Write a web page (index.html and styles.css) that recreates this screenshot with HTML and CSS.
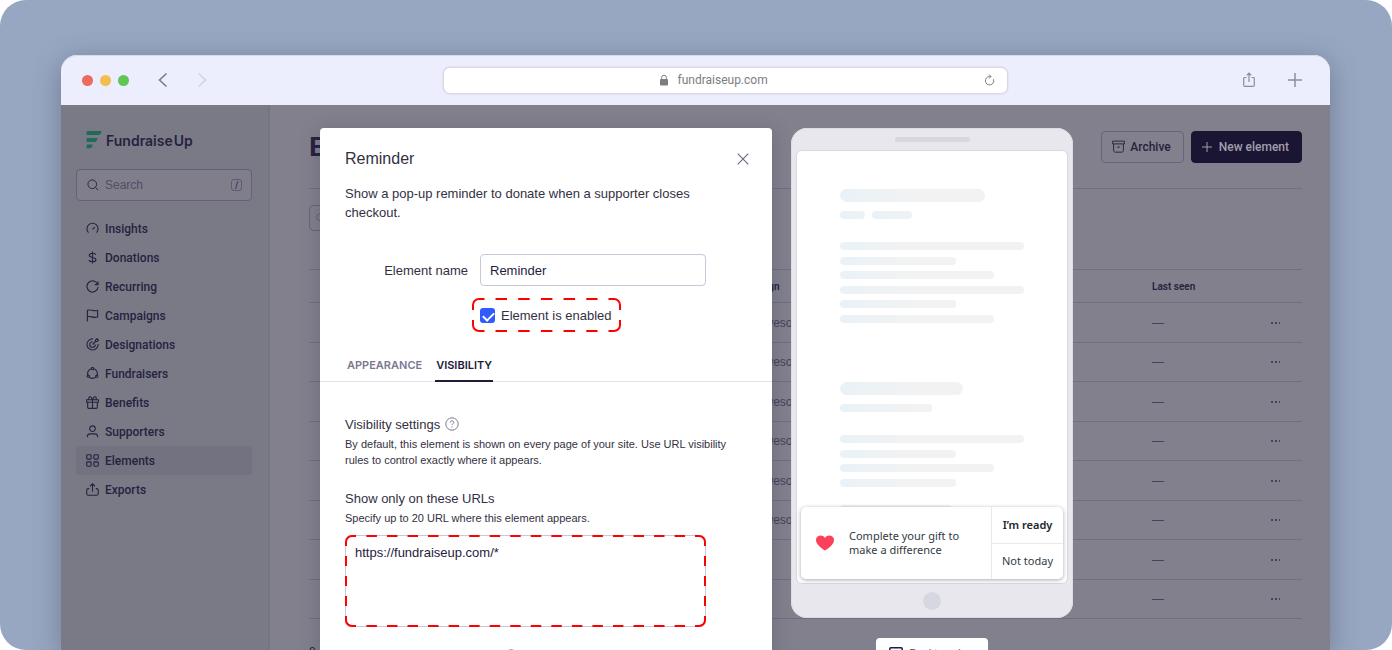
FILE: index.html
```html
<!DOCTYPE html>
<html lang="en">
<head>
  <meta charset="UTF-8" />
  <meta name="viewport" content="width=device-width, initial-scale=1.0" />
  <title>Fundraise Up - Elements</title>
  <link rel="stylesheet" href="styles.css">
</head>
<body>

<div class="stage">
  <div class="browser">

    <header class="chrome">
      <div class="chrome-left">
        <span class="dot red"></span><span class="dot yellow"></span><span class="dot green"></span>
        <button class="nav-btn back" aria-label="Back"><svg width="10" height="16" viewBox="0 0 10 16"><path d="M8.500 1.500 1.500 8l7 6.500"/></svg></button>
        <button class="nav-btn forward" aria-label="Forward"><svg width="10" height="16" viewBox="0 0 10 16"><path d="M1.500 1.500 8.500 8l-7 6.500"/></svg></button>
      </div>
      <div class="url-bar">
        <svg class="lock" width="8" height="12" viewBox="0 0 8 12"><rect x="0" y="5" width="8" height="6.500" rx="1"/><path d="M1.700 5.500V3.500a2.300 2.300 0 0 1 4.600 0v2"/></svg>
        <input class="url" type="text" aria-label="Address" value="fundraiseup.com">
        <button class="reload" aria-label="Reload"><svg width="11" height="12" viewBox="0 0 11 12"><path d="M9.500 5.200a4.200 4.200 0 1 1-4-2.700h1.300M5 .5l2 2-2 2"/></svg></button>
      </div>
      <div class="chrome-right">
        <button class="nav-btn" aria-label="Share"><svg width="12" height="16" viewBox="0 0 12 16"><path d="M3.500 5.500H2A1.200 1.200 0 0 0 .7 6.700v6.500A1.200 1.200 0 0 0 2 14.400h8a1.200 1.200 0 0 0 1.300-1.200V6.700A1.200 1.200 0 0 0 10 5.500H8.500M6 10V1.200M3.700 3.300 6 1l2.300 2.300"/></svg></button>
        <button class="nav-btn plus" aria-label="New tab"><svg width="14" height="14" viewBox="0 0 14 14"><path d="M7 0v14M0 7h14"/></svg></button>
      </div>
    </header>

    <div class="app">
      <aside class="sidebar">
        <a class="logo" href="#">
          <svg width="16" height="18" viewBox="0 0 16 18"><path d="M2 0h13.500c-.2 2.700-1.300 4-3.500 4H.5V1.500C.5.600 1 0 2 0zM2 7h9.500c-.2 2.700-1.300 4-3.500 4H.5V8.500C.5 7.600 1 7 2 7zM2 13.500h4.700c-.2 2.600-1.200 3.800-3.200 3.800h-3V15c0-.9.5-1.500 1.500-1.500z"/></svg>
          <span>Fundraise<span class="up">Up</span></span>
        </a>
        <label class="search">
          <svg width="12" height="12" viewBox="0 0 13 13"><circle cx="5.700" cy="5.700" r="4.700"/><path d="m9.200 9.200 2.900 2.900"/></svg>
          <input type="text" placeholder="Search" aria-label="Search">
          <kbd>/</kbd>
        </label>
        <nav class="menu">
          <a href="#"><svg viewBox="0 0 14 14"><path d="M2.700 11.500a6 6 0 1 1 8.600 0M7 8l2.500-2.500"/></svg>Insights</a>
          <a href="#"><svg viewBox="0 0 14 14"><path d="M7 .5v13M10.500 4.300C10.200 3 9 2.400 7 2.400S3.500 3.200 3.500 4.700 5 6.700 7 7s3.700.8 3.700 2.400S9 11.600 7 11.600 3.500 11 3.200 9.600"/></svg>Donations</a>
          <a href="#"><svg viewBox="0 0 14 14"><path d="M13 1.500V5H9.500M12.700 5A6 6 0 1 0 13 7.500"/></svg>Recurring</a>
          <a href="#"><svg viewBox="0 0 14 14"><path d="M1.500 13.500V1.300c3.500-1.300 6 1.600 11 .4v7c-5 1.300-7.500-1.600-11-.4"/></svg>Campaigns</a>
          <a href="#"><svg viewBox="0 0 14 14"><path d="M7.500 1A6 6 0 1 0 13 6.500M7 4a3 3 0 1 0 3 3M7 7l3.500-3.500M10.200 3.800V2.200L12 .6l.2 1.400 1.400.2L12 3.800z"/></svg>Designations</a>
          <a href="#"><svg viewBox="0 0 14 14"><circle cx="7" cy="7" r="5.300"/><circle class="node" cx="7" cy="1.700" r="1.200"/><circle class="node" cx="2.400" cy="9.900" r="1.200"/><circle class="node" cx="11.600" cy="9.900" r="1.200"/></svg>Fundraisers</a>
          <a href="#"><svg viewBox="0 0 14 14"><path d="M.7 4h12.600v2.800H.7zM1.800 6.800V12c0 .8.500 1.300 1.300 1.300h7.800c.8 0 1.300-.5 1.300-1.300V6.800M7 4v9.300M7 4C6 1 4.800.6 3.900.8 2.500 1.200 2.600 3.500 4 4M7 4c1-3 2.200-3.400 3.100-3.200C11.500 1.200 11.400 3.500 10 4"/></svg>Benefits</a>
          <a href="#"><svg viewBox="0 0 14 14"><circle cx="7" cy="4" r="3"/><path d="M1.500 13.300v-.8c0-2 1.300-3 3-3h5c1.700 0 3 1 3 3v.8"/></svg>Supporters</a>
          <a class="active" href="#"><svg viewBox="0 0 14 14"><rect x=".8" y=".8" width="4.700" height="4.700" rx="1"/><rect x="8.500" y=".8" width="4.700" height="4.700" rx="1"/><rect x=".8" y="8.500" width="4.700" height="4.700" rx="1"/><rect x="8.500" y="8.500" width="4.700" height="4.700" rx="1"/></svg>Elements</a>
          <a href="#"><svg viewBox="0 0 14 14"><path d="M3.500 6H2.700C1.500 6 .8 6.800.8 7.800v3.400c0 1.200.8 2 2 2h8.400c1.200 0 2-.8 2-2V7.800c0-1-.7-1.800-1.900-1.800h-.8M7 9.500V1M4.300 3.500 7 .8l2.700 2.700"/></svg>Exports</a>
        </nav>
      </aside>

      <main class="main">
        <div class="page-head">
          <h1>Elements</h1>
          <div class="actions">
            <button class="btn"><svg width="13" height="13" viewBox="0 0 14 14"><path d="M.7 1.200h12.600v3H.7zM1.700 4.200v7c0 1.200.7 1.900 1.900 1.900h6.800c1.200 0 1.900-.7 1.900-1.900v-7M5.500 7.700h3"/></svg>Archive</button>
            <button class="btn dark"><svg width="10" height="10" viewBox="0 0 10 10"><path d="M5 0v10M0 5h10"/></svg>New element</button>
          </div>
        </div>
        <label class="filter">
          <svg width="10" height="10" viewBox="0 0 13 13"><circle cx="5.700" cy="5.700" r="4.700"/><path d="m9.200 9.200 2.900 2.900"/></svg>
          <input type="text" aria-label="Filter elements">
        </label>
        <table>
          <thead>
            <tr><th class="col-name"></th><th class="col-campaign">Campaign</th><th class="col-seen">Last seen</th><th class="col-more"></th></tr>
          </thead>
          <tbody>
            <tr><td></td><td>Our Awesome</td><td>—</td><td><button class="more" aria-label="More"></button></td></tr>
            <tr><td></td><td>Our Awesome</td><td>—</td><td><button class="more" aria-label="More"></button></td></tr>
            <tr><td></td><td>Our Awesome</td><td>—</td><td><button class="more" aria-label="More"></button></td></tr>
            <tr><td></td><td>Our Awesome</td><td>—</td><td><button class="more" aria-label="More"></button></td></tr>
            <tr><td></td><td>Our Awesome</td><td>—</td><td><button class="more" aria-label="More"></button></td></tr>
            <tr><td></td><td>Our Awesome</td><td>—</td><td><button class="more" aria-label="More"></button></td></tr>
            <tr><td></td><td></td><td>—</td><td><button class="more" aria-label="More"></button></td></tr>
            <tr><td></td><td></td><td>—</td><td><button class="more" aria-label="More"></button></td></tr>
          </tbody>
        </table>
        <p class="count">8 elements</p>
      </main>

      <div class="overlay">
        <section class="modal" role="dialog" aria-labelledby="modal-title">
          <div class="modal-head">
            <h2 id="modal-title">Reminder</h2>
            <button class="close" aria-label="Close"><svg width="12" height="12" viewBox="0 0 12 12"><path d="m.7.700 10.600 10.600M11.300.700.700 11.300"/></svg></button>
          </div>
          <p class="intro">Show a pop-up reminder to donate when a supporter closes checkout.</p>

          <div class="field">
            <label for="element-name">Element name</label>
            <input id="element-name" type="text" value="Reminder">
          </div>

          <div class="enabled">
            <input id="enabled" type="checkbox" checked>
            <label for="enabled">Element is enabled</label>
            <svg class="marker" viewBox="0 0 149 34" preserveAspectRatio="none">
              <path d="M1 12V7a6 6 0 0 1 6-6h5.500M136.500 1h5.500a6 6 0 0 1 6 6v5M148 22v5a6 6 0 0 1-6 6h-5.500M12.500 33H7a6 6 0 0 1-6-6v-5"/>
              <path class="dashes-short" d="M23.500 1h102M23.500 33h102"/>
            </svg>
          </div>

          <div class="tabs">
            <button class="tab">APPEARANCE</button>
            <button class="tab current">VISIBILITY</button>
          </div>

          <div class="settings">
            <h3>Visibility settings
              <svg class="help" width="14" height="14" viewBox="0 0 14 14"><circle cx="7" cy="7" r="6.200"/><path d="M5.200 5.600c0-1.200.8-1.800 1.800-1.800s1.800.6 1.800 1.600c0 1.300-1.800 1.400-1.800 2.700M7 9.500v1"/></svg>
            </h3>
            <p>By default, this element is shown on every page of your site. Use URL visibility rules to control exactly where it appears.</p>

            <h3><label for="urls">Show only on these URLs</label></h3>
            <p>Specify up to 20 URL where this element appears.</p>
            <div class="urls">
              <textarea id="urls" spellcheck="false">https://fundraiseup.com/*</textarea>
              <svg class="marker" viewBox="0 0 362 92" preserveAspectRatio="none">
                <path d="M1 11V7a6 6 0 0 1 6-6h4M351 1h4a6 6 0 0 1 6 6v4M361 81v4a6 6 0 0 1-6 6h-4M11 91H7a6 6 0 0 1-6-6v-4"/>
                <path class="dashes-long" d="M21.500 1h320M21.500 91h320"/>
                <path class="dashes-side" d="M1 21v51M361 21v51"/>
              </svg>
            </div>

            <h3>Don't show on these URLs
              <svg class="help" width="14" height="14" viewBox="0 0 14 14"><circle cx="7" cy="7" r="6.200"/><path d="M5.200 5.600c0-1.200.8-1.800 1.800-1.800s1.800.6 1.800 1.600c0 1.300-1.800 1.400-1.800 2.700M7 9.500v1"/></svg>
            </h3>
          </div>
        </section>

        <section class="preview">
          <div class="phone">
            <div class="speaker"></div>
            <div class="screen">
              <div class="skeleton">
                <i class="bar tall w145"></i>
                <div class="pair"><i class="bar w25"></i><i class="bar w40"></i></div>
                <div class="lines six">
                  <i class="bar w184"></i><i class="bar w116"></i><i class="bar w154"></i><i class="bar w184"></i><i class="bar w116"></i><i class="bar w154"></i>
                </div>
                <i class="bar tall second w123"></i>
                <div class="pair"><i class="bar w92"></i></div>
                <div class="lines four">
                  <i class="bar w184"></i><i class="bar w116"></i><i class="bar w154"></i><i class="bar w116"></i>
                </div>
                <i class="bar last w112"></i>
              </div>
              <div class="toast">
                <svg class="heart" width="18" height="16" viewBox="0 0 18 16"><path d="M9 15.500C6.500 14 0 9.800 0 5 0 2.200 2.200.5 4.600.5 6.500.5 8 1.300 9 3c1-1.700 2.500-2.500 4.400-2.500C15.800.5 18 2.200 18 5c0 4.800-6.500 9-9 10.500z"/></svg>
                <p>Complete your gift to make a difference</p>
                <div class="toast-actions">
                  <button class="ready">I’m ready</button>
                  <button>Not today</button>
                </div>
              </div>
            </div>
            <div class="home"></div>
          </div>
          <button class="view"><svg width="14" height="12" viewBox="0 0 14 12"><path d="M.8 1.800c0-.6.400-1 1-1h10.400c.6 0 1 .4 1 1V9H.8zM0 11h14"/></svg>Desktop view</button>
        </section>
      </div>
    </div>

  </div>
</div>

</body>
</html>
```
FILE: styles.css
```css
* { margin: 0; padding: 0; box-sizing: border-box; }
body { background: #fff; font-family: "Liberation Sans", Arial, sans-serif; font-size: 13px; color: #33313f; }
button, input, textarea { font: inherit; color: inherit; background: none; border: none; outline: none; }
button { cursor: pointer; }
a { color: inherit; text-decoration: none; }
svg { fill: none; stroke: currentColor; flex: none; }

.stage { height: 100vh; padding: 55px 62px 0 61px; background: #98a7c1; border-radius: 26px; overflow: hidden; }
.browser { display: flex; flex-direction: column; height: 100%; border-radius: 16px 16px 0 0; box-shadow: 0 6px 28px rgba(50,60,85,.4); }

/* browser bar */
.chrome { display: grid; grid-template-columns: 361px 1fr 294px; align-items: center; height: 50px; padding: 0 28px 0 21px; background: #ecedfd; border-radius: 16px 16px 0 0; box-shadow: inset 0 1px #d6dbec; }
.chrome-left { display: flex; align-items: center; gap: 7px; }
.dot { width: 11px; height: 11px; border-radius: 50%; }
.red { background: #ed6a5e; }
.yellow { background: #f5bd4f; }
.green { background: #61c554; }
.nav-btn { display: flex; color: #8e8e93; stroke-width: 1.200; }
.back { margin-left: 22px; color: #77777c; stroke-width: 1.500; }
.forward { margin-left: 22px; color: #d2d3e2; stroke-width: 1.500; }
.chrome-right { display: flex; justify-content: flex-end; align-items: center; gap: 33px; }
.plus { stroke-width: 1.500; }
.url-bar { position: relative; display: flex; align-items: center; justify-content: center; gap: 10px; height: 27px; padding-right: 22px; background: #fff; border: 1px solid #d8d8e8; border-radius: 7px; box-shadow: 0 0 2px #cfcfe0; color: #7d7d80; }
.lock rect { fill: currentColor; stroke: none; }
.url { width: 92px; font-family: Roboto, sans-serif; font-size: 12px; }
.reload { position: absolute; right: 12px; display: flex; }

/* app */
.app { position: relative; display: flex; flex: 1; min-height: 0; overflow: hidden; background: #82808c; color: #26223f; }
.sidebar { width: 209px; padding: 25px 16px 0 15px; background: #7a7a86; border-right: 2px solid #757583; }
.logo { display: flex; align-items: center; gap: 4px; height: 20px; margin-left: 10px; font-family: Inter, sans-serif; font-size: 14px; font-weight: 600; }
.logo svg { fill: #216a58; stroke: none; }
.up { margin-left: 1px; }
.search { display: flex; align-items: center; gap: 6px; height: 32px; margin: 19px 0 13px; padding: 0 9px 0 10px; border: 1px solid #636079; border-radius: 4px; background: #807e8a; }
.search input { flex: 1; min-width: 0; font-size: 12px; }
.search input::placeholder { color: #514e66; opacity: 1; }
kbd { width: 11px; height: 12px; border: 1px solid #5c5972; border-radius: 3px; font: 9px/10px Inter, sans-serif; text-align: center; }
.menu a { display: flex; align-items: center; gap: 6px; height: 29px; padding-left: 10px; border-radius: 3px; font-family: Roboto, sans-serif; font-size: 12px; font-weight: 500; }
.menu svg { width: 13px; height: 13px; stroke-width: 1.200; }
.menu .node { fill: #7a7a86; }
.menu .active { background: #737280; }

.main { flex: 1; min-width: 0; padding: 0 28px 0 39px; }
.page-head { display: flex; align-items: center; justify-content: space-between; height: 84px; border-bottom: 1px solid #706e7f; }
h1 { font-size: 28px; }
.actions { display: flex; gap: 7px; }
.btn { display: flex; align-items: center; gap: 5px; height: 32px; padding: 0 12px 0 10px; border: 1px solid #66637b; border-radius: 4px; font-family: Roboto, sans-serif; font-size: 12px; font-weight: 500; }
.btn.dark { gap: 7px; background: #1a1533; border-color: #1a1533; color: #a19fac; }
.filter { display: flex; align-items: center; width: 200px; height: 26px; margin: 16px 0 38px; padding: 0 6px; border: 1px solid #66637b; border-radius: 5px; color: #5a5870; }
table { width: 100%; border-collapse: collapse; table-layout: fixed; border-top: 1px solid #706e7f; }
tr { height: 39px; border-bottom: 1px solid #706e7f; }
tbody tr:nth-child(odd) { height: 40px; }
thead tr { height: 33px; }
th { font-family: Roboto, sans-serif; font-size: 10px; font-weight: 600; text-align: left; }
td { font-size: 12px; line-height: 14px; color: #45425b; }
.col-name { width: 425px; }
.col-seen { width: 118px; }
.col-more { width: 32px; }
.more { display: block; width: 10px; height: 2px; background: radial-gradient(circle, #45425b 1px, transparent 1px) 0 0 / 4px 2px; }
.count { margin-top: 26px; font-size: 12px; }

/* dialog and preview */
.overlay { position: absolute; inset: 0; display: flex; justify-content: center; gap: 19px; padding: 23px 0 0 2px; overflow: hidden; color: #33313f; }
.modal { width: 452px; height: 600px; padding-top: 21px; background: #fff; border-radius: 4px; box-shadow: 0 4px 20px rgba(40,40,80,.25); }
.modal-head { display: flex; align-items: center; justify-content: space-between; height: 20px; padding: 0 23px 0 25px; }
h2 { font-size: 16px; font-weight: 400; line-height: 20px; }
.close { display: flex; color: #6f6c84; stroke-width: 1.200; }
.intro { margin: 15px 50px 32px 25px; line-height: 19px; }
.field { display: grid; grid-template-columns: 148px 226px; align-items: center; gap: 12px; }
.field label { text-align: right; }
.field input { height: 32px; padding: 0 9px; border: 1px solid #c9c7d8; border-radius: 4px; color: #1f1b3c; }
.enabled { position: relative; display: flex; align-items: center; gap: 6px; width: 149px; height: 34px; margin: 12px 0 22px 152px; padding-left: 8px; }
.enabled input { appearance: none; width: 15px; height: 15px; border-radius: 3px; background: #2f5bff; }
.enabled input:checked::before { content: ""; display: block; width: 9px; height: 5px; margin: 4px 0 0 3px; border: solid #fff; border-width: 0 0 2px 2px; transform: rotate(-45deg); }
.marker { position: absolute; inset: 0; width: 100%; height: 100%; stroke: #f00; stroke-width: 2; pointer-events: none; }
.dashes-short { stroke-dasharray: 11.500 11.200; }
.dashes-long { stroke-dasharray: 10.500 10.100; }
.dashes-side { stroke-dasharray: 10 10; }
.tabs { display: flex; gap: 12px; height: 28px; padding-left: 26px; box-shadow: inset 0 -1px #e2e1ec; }
.tab { padding: 0 1px 4px; border-bottom: 2px solid transparent; font-family: Inter, sans-serif; font-size: 11px; font-weight: 600; line-height: 22px; color: #7b7890; }
.tab.current { border-color: #1f1b3c; color: #1f1b3c; }
.settings { padding: 13px 25px 0; }
h3 { display: flex; align-items: center; gap: 5px; height: 20px; margin-top: 19px; font-size: 13px; font-weight: 400; }
.help { color: #7b7890; }
.settings p { margin-top: 2px; font-size: 11px; line-height: 16px; }
.settings p + h3 { margin-top: 20px; }
.urls { position: relative; width: 361px; height: 92px; margin-top: 9px; }
.urls textarea { display: block; width: 100%; height: 100%; padding: 7px 9px; border: 1px solid #c9c7d8; border-radius: 6px; resize: none; line-height: 19px; color: #1f1b3c; }

.preview { display: flex; flex-direction: column; align-items: center; width: 282px; }
.phone { display: flex; flex-direction: column; align-items: center; flex: none; width: 100%; height: 490px; padding: 9px 5px 0; border-radius: 16px; background: #e8e7ee; box-shadow: inset 0 0 0 1px #dddce6; }
.speaker { width: 75px; height: 5px; border-radius: 3px; background: #d7d7e1; }
.screen { position: relative; width: 100%; height: 434px; margin-top: 8px; border: 1px solid #d8d8e3; border-radius: 6px; background: #fff; }
.skeleton { display: flex; flex-direction: column; padding: 38px 0 0 43px; }
.bar { height: 8px; border-radius: 4px; background: linear-gradient(90deg, #eaf2f7, #f2f2f2 80px); }
.tall { height: 13px; border-radius: 7px; }
.pair { display: flex; gap: 7px; margin: 9px 0 23px; }
.lines { display: flex; flex-direction: column; justify-content: space-between; }
.six { height: 81px; }
.four { height: 52px; }
.second { margin-top: 59px; }
.last { margin-top: 18px; }
.w25 { width: 25px; }
.w40 { width: 40px; }
.w92 { width: 92px; }
.w112 { width: 112px; }
.w116 { width: 116px; }
.w123 { width: 123px; }
.w145 { width: 145px; }
.w154 { width: 154px; }
.w184 { width: 184px; }
.toast { position: absolute; left: 4px; right: 4px; bottom: 4px; display: flex; align-items: center; height: 72px; padding-left: 15px; border-radius: 5px; background: #fff; box-shadow: 0 1px 4px rgba(0,0,0,.35); font-family: "Noto Sans", sans-serif; font-size: 11px; line-height: 14px; color: #333a42; }
.toast p { flex: 1; margin: 0 24px 0 15px; }
.heart { fill: #fb4059; stroke: none; }
.toast-actions { display: grid; width: 72px; height: 100%; border-left: 1px solid #e9e9ec; }
.toast-actions button + button { border-top: 1px solid #e9e9ec; }
.ready { font-weight: 600; color: #20262d; }
.home { width: 18px; height: 18px; margin-top: 8px; border-radius: 50%; background: #d7d7e1; }
.view { display: flex; align-items: center; justify-content: center; gap: 6px; flex: none; width: 112px; height: 30px; margin-top: 20px; border-radius: 4px; background: #fff; font-size: 11px; color: #55536a; }
.view svg { color: #1f1b3c; stroke-width: 1.500; }
```
